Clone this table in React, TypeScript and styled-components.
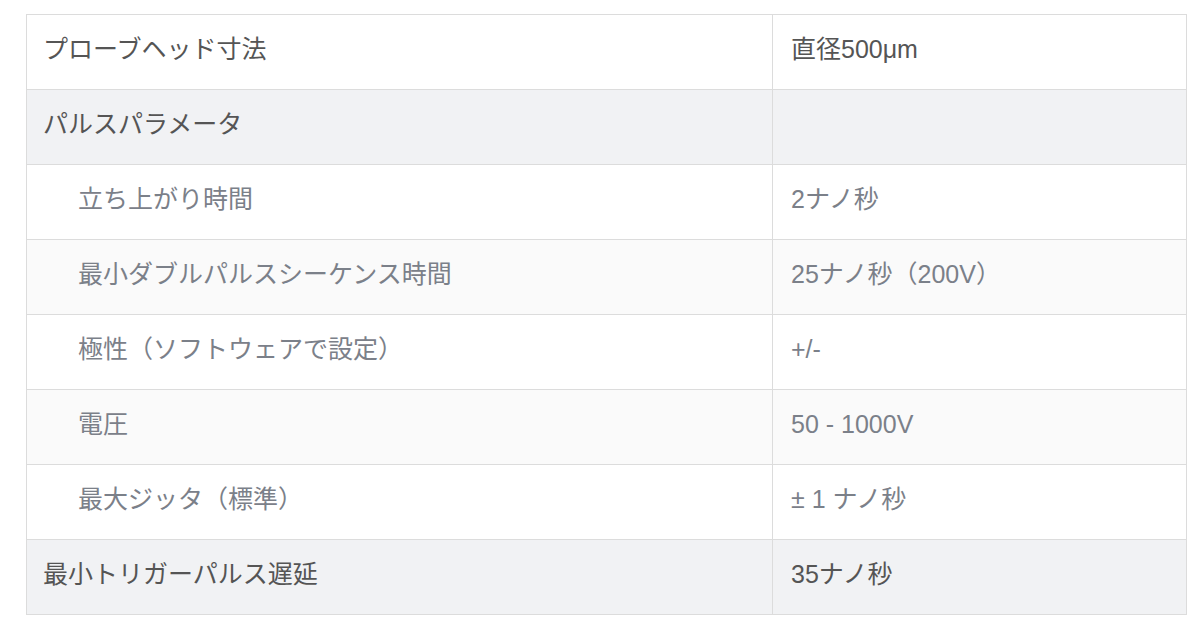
import React from 'react';
import styled, { createGlobalStyle } from 'styled-components';

const GlobalStyle = createGlobalStyle`
    html, body {
        margin: 0;
        padding: 0;
        background: #fff;
    }
    body {
        font-family: 'Liberation Sans', Arial, 'Noto Sans CJK JP', sans-serif;
    }
`;

const Page = styled.div`
    padding: 14px 16px 0 26px;
`;

const SpecTable = styled.table`
    width: 1161px;
    border-collapse: collapse;
    border: 1px solid #dcdcdc;
    font-size: 25px;
    line-height: 1.2;
    table-layout: fixed;
`;

type Kind = 'plain' | 'group' | 'sub' | 'subAlt';

const rowBg: Record<Kind, string> = {
    plain: '#ffffff',
    group: '#f1f2f4',
    sub: '#ffffff',
    subAlt: '#fafafa',
};

const Row = styled.tr<{ $kind: Kind }>`
    height: 75px;
    background: ${props => rowBg[props.$kind]};
`;

const isSub = (k: Kind) => k === 'sub' || k === 'subAlt';

const LabelCell = styled.td<{ $kind: Kind }>`
    width: 746px;
    box-sizing: border-box;
    padding: 0 18px 6px ${props => (isSub(props.$kind) ? '51px' : '16px')};
    border: 1px solid #dcdcdc;
    color: ${props => (isSub(props.$kind) ? '#7b8089' : '#555555')};
    vertical-align: middle;
`;

const ValueCell = styled.td<{ $kind: Kind }>`
    padding: 0 18px 6px 18px;
    border: 1px solid #dcdcdc;
    color: ${props => (isSub(props.$kind) ? '#7b8089' : '#555555')};
    vertical-align: middle;
`;

const rows: { label: string; value: string; kind: Kind }[] = [
    { label: 'プローブヘッド寸法', value: '直径500μm', kind: 'plain' },
    { label: 'パルスパラメータ', value: '', kind: 'group' },
    { label: '立ち上がり時間', value: '2ナノ秒', kind: 'sub' },
    { label: '最小ダブルパルスシーケンス時間', value: '25ナノ秒（200V）', kind: 'subAlt' },
    { label: '極性（ソフトウェアで設定）', value: '+/-', kind: 'sub' },
    { label: '電圧', value: '50 - 1000V', kind: 'subAlt' },
    { label: '最大ジッタ（標準）', value: '± 1 ナノ秒', kind: 'sub' },
    { label: '最小トリガーパルス遅延', value: '35ナノ秒', kind: 'group' },
];

export default function App() {
    return (
        <Page>
            <GlobalStyle />
            <SpecTable>
                <tbody>
                    {rows.map(r => (
                        <Row key={r.label} $kind={r.kind}>
                            <LabelCell $kind={r.kind}>{r.label}</LabelCell>
                            <ValueCell $kind={r.kind}>{r.value}</ValueCell>
                        </Row>
                    ))}
                </tbody>
            </SpecTable>
        </Page>
    );
}
